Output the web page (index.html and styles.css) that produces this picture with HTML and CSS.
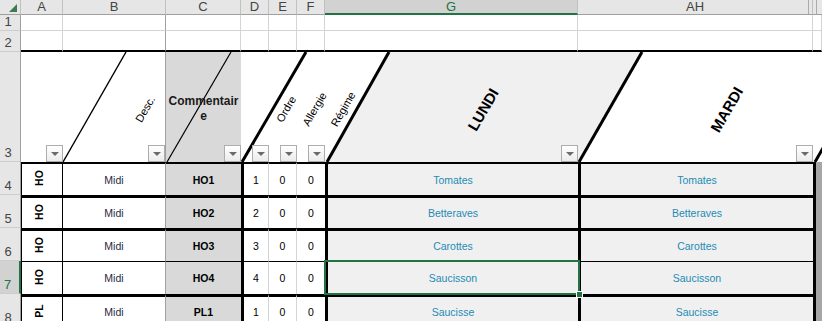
FILE: index.html
```html
<!DOCTYPE html>
<html lang="fr">
<head>
  <meta charset="UTF-8" />
  <meta name="viewport" content="width=device-width, initial-scale=1.0"/>
  <title>Menu de la semaine</title>
  <link rel="stylesheet" href="styles.css">
</head>
<body>
  <div class="sheet">
    <!-- column letters -->
    <div class="hdr corner"><span class="select-all"></span></div>
    <div class="hdr">A</div>
    <div class="hdr">B</div>
    <div class="hdr">C</div>
    <div class="hdr">D</div>
    <div class="hdr">E</div>
    <div class="hdr">F</div>
    <div class="hdr active">G</div>
    <div class="hdr last">AH</div>
    <div class="hdr next"></div>

    <!-- empty rows -->
    <div class="row blank r1">
      <div class="rh">1</div>
      <div class="cell ca"></div>
      <div class="cell cb"></div>
      <div class="cell cc"></div>
      <div class="cell cd"></div>
      <div class="cell ce"></div>
      <div class="cell cf"></div>
      <div class="cell cg"></div>
      <div class="cell cah"></div>
      <div class="cell cai"></div>
    </div>
    <div class="row blank r2">
      <div class="rh">2</div>
      <div class="cell ca"></div>
      <div class="cell cb"></div>
      <div class="cell cc"></div>
      <div class="cell cd"></div>
      <div class="cell ce"></div>
      <div class="cell cf"></div>
      <div class="cell cg"></div>
      <div class="cell cah"></div>
      <div class="cell cai"></div>
    </div>

    <!-- table header, angled -->
    <div class="rh">3</div>
    <div class="band">
      <svg class="slants" viewBox="0 0 801 110" preserveAspectRatio="none">
        <rect x="145" y="0" width="75" height="110" fill="#d9d9d9"/>
        <polygon points="306,110 368,0 621,0 558,110" fill="#f0f0f0"/>
        <g stroke="#000">
          <line x1="42" y1="110" x2="105" y2="0" stroke-width="1.4"/>
          <line x1="146" y1="110" x2="210" y2="0" stroke-width="1.2"/>
          <line x1="221" y1="110" x2="285" y2="0" stroke-width="3"/>
          <line x1="306" y1="110" x2="368" y2="0" stroke-width="3"/>
          <line x1="558" y1="110" x2="621" y2="0" stroke-width="3"/>
          <line x1="794" y1="110" x2="857" y2="0" stroke-width="3"/>
        </g>
      </svg>
      <div class="cell ca"><button class="filter"></button></div>
      <div class="cell cb"><span class="tilt">Desc.</span><button class="filter"></button></div>
      <div class="cell cc"><span class="comment">Commentair<br>e</span><button class="filter"></button></div>
      <div class="cell cd"><span class="tilt">Ordre</span><button class="filter"></button></div>
      <div class="cell ce"><span class="tilt">Allergie</span><button class="filter"></button></div>
      <div class="cell cf"><span class="tilt">Régime</span><button class="filter"></button></div>
      <div class="cell cg"><span class="tilt day">LUNDI</span><button class="filter"></button></div>
      <div class="cell cah"><span class="tilt day">MARDI</span><button class="filter"></button></div>
      <div class="cell cai"></div>
    </div>

    <!-- data -->
    <div class="row data r4">
      <div class="rh">4</div>
      <div class="cell ca"><span class="vert">HO</span></div>
      <div class="cell cb">Midi</div>
      <div class="cell cc">HO1</div>
      <div class="cell cd">1</div>
      <div class="cell ce">0</div>
      <div class="cell cf">0</div>
      <div class="cell cg">Tomates</div>
      <div class="cell cah">Tomates</div>
      <div class="cell cai"></div>
    </div>
    <div class="row data r5">
      <div class="rh">5</div>
      <div class="cell ca"><span class="vert">HO</span></div>
      <div class="cell cb">Midi</div>
      <div class="cell cc">HO2</div>
      <div class="cell cd">2</div>
      <div class="cell ce">0</div>
      <div class="cell cf">0</div>
      <div class="cell cg">Betteraves</div>
      <div class="cell cah">Betteraves</div>
      <div class="cell cai"></div>
    </div>
    <div class="row data r6">
      <div class="rh">6</div>
      <div class="cell ca"><span class="vert">HO</span></div>
      <div class="cell cb">Midi</div>
      <div class="cell cc">HO3</div>
      <div class="cell cd">3</div>
      <div class="cell ce">0</div>
      <div class="cell cf">0</div>
      <div class="cell cg">Carottes</div>
      <div class="cell cah">Carottes</div>
      <div class="cell cai"></div>
    </div>
    <div class="row data r7">
      <div class="rh active">7</div>
      <div class="cell ca"><span class="vert">HO</span></div>
      <div class="cell cb">Midi</div>
      <div class="cell cc">HO4</div>
      <div class="cell cd">4</div>
      <div class="cell ce">0</div>
      <div class="cell cf">0</div>
      <div class="cell cg">Saucisson<span class="selection"></span></div>
      <div class="cell cah">Saucisson</div>
      <div class="cell cai"></div>
    </div>
    <div class="row data r8">
      <div class="rh">8</div>
      <div class="cell ca"><span class="vert">PL</span></div>
      <div class="cell cb">Midi</div>
      <div class="cell cc">PL1</div>
      <div class="cell cd">1</div>
      <div class="cell ce">0</div>
      <div class="cell cf">0</div>
      <div class="cell cg">Saucisse</div>
      <div class="cell cah">Saucisse</div>
      <div class="cell cai"></div>
    </div>
  </div>
</body>
</html>
```

FILE: styles.css
```css
* {
  box-sizing: border-box;
}

body {
  margin: 0;
  background: #ffffff;
  font-family: "Liberation Sans", Arial, sans-serif;
  color: #000000;
  overflow: hidden;
}

.sheet {
  display: grid;
  grid-template-columns: 21px 42px 103px 75px 28px 28px 28px 253px 235px 1fr;
  grid-template-rows: 15px 16px 21px 110px repeat(5, 33px);
  width: 822px;
}

.row {
  display: contents;
}

/* column letters */
.hdr {
  background: #e6e6e6;
  border-right: 1px solid #c0c0c0;
  border-bottom: 1px solid #9f9f9f;
  color: #444444;
  font-size: 13px;
  line-height: 14px;
  text-align: center;
}

.hdr.active {
  background: #d2d2d2;
  color: #217346;
  border-bottom: 2px solid #217346;
}

.hdr.last {
  box-shadow: inset -3px 0 0 #e6e6e6, inset -4px 0 0 #ababab;
}

.hdr.next {
  border-right: 0;
  box-shadow: inset 3px 0 0 #e6e6e6, inset 4px 0 0 #ababab;
}

.corner {
  display: flex;
  justify-content: flex-end;
  align-items: flex-end;
  padding: 0 3px 2px 0;
}

.select-all {
  width: 0;
  height: 0;
  border-left: 8px solid transparent;
  border-bottom: 8px solid #3b7b4f;
}

/* row numbers */
.rh {
  background: #e6e6e6;
  border-right: 1px solid #9f9f9f;
  border-bottom: 1px solid #cdcdcd;
  color: #444444;
  font-size: 13px;
  line-height: 13px;
  display: flex;
  justify-content: center;
  align-items: flex-end;
  padding: 0 4px 2px 0;
}

.rh.active {
  background: #d2d2d2;
  color: #217346;
  border-right: 2px solid #217346;
}

/* rows 1 and 2 */
.blank .cell {
  border-right: 1px solid #d4d4d4;
  border-bottom: 1px solid #d4d4d4;
}

.blank .cb {
  border-right-color: #a0a0a0; /* frozen pane */
}

.blank.r2 .cell {
  border-bottom: 2px solid #000000;
}

/* angled header row */
.band {
  grid-column: span 9;
  display: grid;
  grid-template-columns: 42px 103px 75px 28px 28px 28px 253px 235px 1fr;
}

.slants {
  grid-area: 1 / 1 / 2 / -1;
  display: block;
  width: 100%;
  height: 100%;
}

.band .cell {
  grid-row: 1;
  position: relative;
  display: flex;
  align-items: center;
  justify-content: center;
  padding-top: 4px;
}

.band .ca { grid-column: 1; }
.band .cb { grid-column: 2; border-right: 1px solid #a0a0a0; }
.band .cc { grid-column: 3; }
.band .cd { grid-column: 4; }
.band .ce { grid-column: 5; }
.band .cf { grid-column: 6; }
.band .cg { grid-column: 7; }
.band .cah { grid-column: 8; }
.band .cai { grid-column: 9; }

.tilt {
  display: inline-block;
  margin-left: 63px; /* centre on the slanted cell, not the column */
  transform: rotate(-60deg);
  white-space: nowrap;
  font-size: 11px;
}

.tilt.day {
  font-size: 15px;
  font-weight: bold;
}

.comment {
  font-size: 12px;
  font-weight: bold;
  line-height: 15px;
  text-align: center;
  color: #1a1a1a;
}

.filter {
  position: absolute;
  right: 0;
  bottom: 0;
  width: 17px;
  height: 17px;
  padding: 0;
  border: 1px solid #adadad;
  background: linear-gradient(#ffffff, #ececec);
}

.filter::after {
  content: "";
  display: block;
  margin: 1px auto 0;
  width: 0;
  height: 0;
  border-left: 4px solid transparent;
  border-right: 4px solid transparent;
  border-top: 4px solid #6b6b6b;
}

/* data rows */
.data .cell {
  border-top: 3px solid #000000;
  display: flex;
  align-items: center;
  justify-content: center;
  font-size: 10.5px;
}

.data.r4 .cell {
  border-top-width: 2px;
}

.data.r7 .cell {
  border-top-width: 1px;
}

.data .ca {
  border-left: 1px solid #000000;
  border-right: 1px solid #000000;
  padding: 0 6px 3px 0;
  font-weight: bold;
}

.vert {
  display: inline-block;
  transform: rotate(-90deg);
}

.data .cb {
  border-right: 1px solid #a0a0a0;
  color: #1f2a44;
}

.data .cc {
  background: #d9d9d9;
  font-weight: bold;
}

.data .cd {
  border-left: 3px solid #000000;
  border-right: 1px solid #d4d4d4;
}

.data .ce {
  border-right: 1px solid #d4d4d4;
}

.data .cg,
.data .cah {
  background: #f0f0f0;
  color: #1e8bb4;
  border-left: 3px solid #000000;
}

.data .cg {
  position: relative;
}

.data .cai {
  background: #a6a6a6;
  border-top: 0;
  border-left: 3px solid #000000;
}

/* active cell G7 */
.selection {
  position: absolute;
  left: -4px;
  right: -2px;
  top: -2px;
  bottom: -1px;
  border: 2px solid #217346;
  z-index: 2;
}

.selection::after {
  content: "";
  position: absolute;
  right: -4px;
  bottom: -4px;
  width: 5px;
  height: 5px;
  background: #217346;
  outline: 1px solid #ffffff;
}
```
